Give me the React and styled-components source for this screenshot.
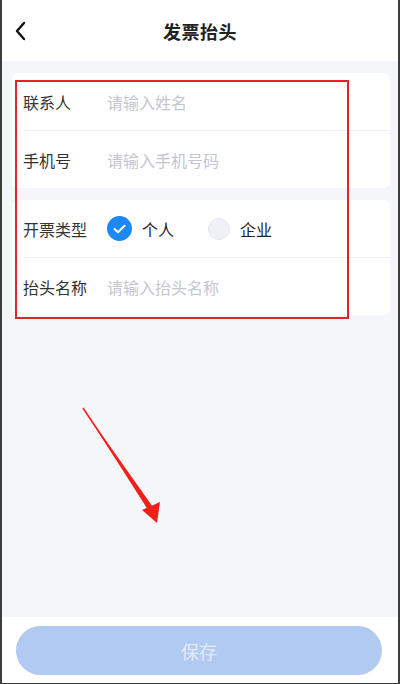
import React from 'react';
import styled, { createGlobalStyle } from 'styled-components';

const Global = createGlobalStyle`
  html, body { margin: 0; padding: 0; }
  body {
    font-family: "Noto Sans CJK SC", "Noto Sans", sans-serif;
    background: #ffffff;
  }
`

const Frame = styled.div`
  position: relative;
  box-sizing: border-box;
  width: 400px;
  height: 684px;
  display: flex;
  flex-direction: column;
  border-left: 2px solid #3c3c3c;
  border-right: 2px solid #3c3c3c;
  border-bottom: 1px solid #3c3c3c;
  background: #fff;
  overflow: hidden;
`

const Header = styled.div`
  height: 61px;
  display: flex;
  align-items: center;
  justify-content: center;
  position: relative;
  background: #fff;
`

const Back = styled.div`
  position: absolute;
  left: 10px;
  top: 20px;
  width: 20px;
  height: 22px;
`

const Title = styled.h1`
  margin: 0;
  font-size: 18px;
  font-weight: 700;
  color: #222;
  letter-spacing: 0.5px;
`

const Body = styled.div`
  flex: 1;
  background: #f5f6fa;
  padding: 12px 8px 0 10px;
  display: flex;
  flex-direction: column;
  gap: 12px;
`

const Card = styled.div`
  background: #fff;
  border-radius: 6px;
  padding-left: 11px;
`

const Row = styled.div`
  height: 57px;
  display: flex;
  align-items: center;
  border-top: ${p => (p.$first ? 'none' : '1px solid #f0f1f4')};
`

const Label = styled.div`
  width: 84px;
  font-size: 16px;
  color: #333;
`

const Placeholder = styled.div`
  font-size: 16px;
  color: #c3c6cd;
`

const Option = styled.div`
  display: flex;
  align-items: center;
  gap: 10px;
  margin-right: ${p => p.$gap}px;
  font-size: 16px;
  color: #222;
`

const Radio = styled.div`
  width: ${p => (p.$on ? 25 : 22)}px;
  height: ${p => (p.$on ? 25 : 22)}px;
  box-sizing: border-box;
  border-radius: 50%;
  display: flex;
  align-items: center;
  justify-content: center;
  background: ${p => (p.$on ? '#1d88f4' : '#eff1f6')};
  border: ${p => (p.$on ? 'none' : '1px solid #e6e8ee')};
`

const Footer = styled.div`
  height: 66px;
  background: #fff;
  display: flex;
  align-items: flex-start;
  justify-content: center;
  padding-top: 9px;
  box-sizing: border-box;
`

const SaveButton = styled.button`
  width: 366px;
  height: 49px;
  border: none;
  border-radius: 25px;
  background: #b1caf2;
  color: #e3eaf8;
  font-size: 18px;
  font-family: inherit;
  margin-left: -2px;
`

const Marker = styled.div`
  position: absolute;
  left: 13px;
  top: 80px;
  width: 334px;
  height: 239px;
  border: 2px solid #e3232b;
  box-sizing: border-box;
  pointer-events: none;
`

const Arrow = styled.svg`
  position: absolute;
  left: 70px;
  top: 400px;
  pointer-events: none;
`

export default function App() {
  return (
    <>
      <Global />
      <Frame>
        <Header>
          <Back>
            <svg width="20" height="22" viewBox="0 0 20 22">
              <path d="M12 3 L5 11 L12 19" fill="none" stroke="#111" strokeWidth="2.4" strokeLinecap="round" strokeLinejoin="round" />
            </svg>
          </Back>
          <Title>发票抬头</Title>
        </Header>
        <Body>
          <Card>
            <Row $first>
              <Label>联系人</Label>
              <Placeholder>请输入姓名</Placeholder>
            </Row>
            <Row>
              <Label>手机号</Label>
              <Placeholder>请输入手机号码</Placeholder>
            </Row>
          </Card>
          <Card>
            <Row $first>
              <Label>开票类型</Label>
              <Option $gap={34}>
                <Radio $on>
                  <svg width="13" height="10" viewBox="0 0 13 10">
                    <path d="M1.5 5 L5 8.3 L11.5 1.7" fill="none" stroke="#fff" strokeWidth="2" strokeLinecap="round" strokeLinejoin="round" />
                  </svg>
                </Radio>
                个人
              </Option>
              <Option $gap={0}>
                <Radio />
                企业
              </Option>
            </Row>
            <Row>
              <Label>抬头名称</Label>
              <Placeholder>请输入抬头名称</Placeholder>
            </Row>
          </Card>
        </Body>
        <Footer>
          <SaveButton>保存</SaveButton>
        </Footer>
        <Marker />
        <Arrow width="100" height="130" viewBox="0 0 100 130">
          <path d="M11 8 L80 112" stroke="#f02018" strokeWidth="1.5" fill="none" />
          <path d="M11 8 L83 110 L78 113 Z" fill="#f02018" />
          <path d="M85 123 L70 110 L88 102 Z" fill="#f02018" />
        </Arrow>
      </Frame>
    </>
  );
}
